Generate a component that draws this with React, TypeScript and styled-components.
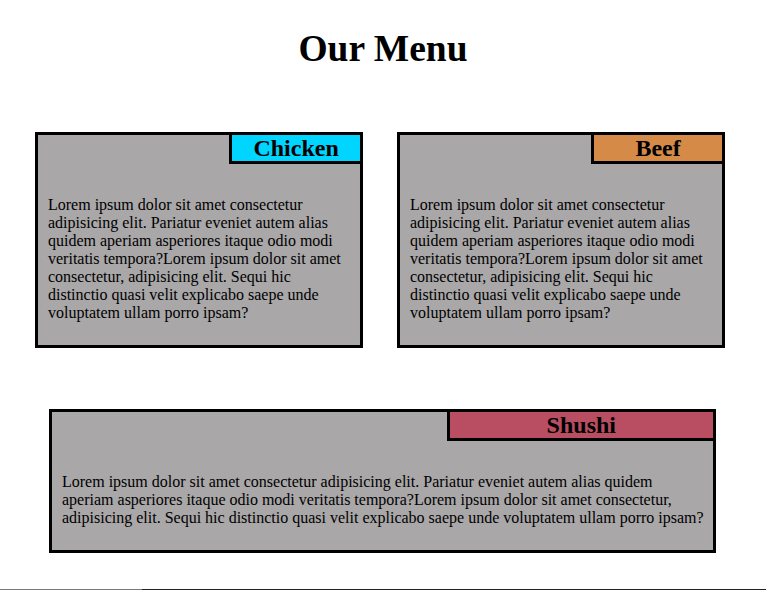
import React from "react";
import styled, { createGlobalStyle } from "styled-components";

const GlobalStyle = createGlobalStyle`
  html, body {
    margin: 0;
    padding: 0;
    background: #ffffff;
  }
  body {
    font-family: "Liberation Serif", "Times New Roman", serif;
    color: #000000;
  }
  * { box-sizing: border-box; }
`;

const Page = styled.main`
  width: 766px;
  display: flex;
  flex-direction: column;
`;

const Title = styled.h1`
  margin: 0;
  padding-top: 28px;
  text-align: center;
  font-size: 37.5px;
  font-weight: bold;
  line-height: 42px;
`;

const TopRow = styled.section`
  display: grid;
  grid-template-columns: 328px 328px;
  column-gap: 34px;
  margin: 62px 0 0 35px;
`;

const Card = styled.article<{ $width?: number }>`
  display: flex;
  flex-direction: column;
  border: 3px solid #000000;
  background: #a9a7a8;
  ${(p) => (p.$width ? `width: ${p.$width}px;` : "")}
`;

const Header = styled.header`
  display: flex;
  justify-content: flex-end;
`;

const Label = styled.h2<{ $color: string }>`
  margin: 0;
  width: calc(40% + 2px);
  height: 29px;
  border-left: 3px solid #000000;
  border-bottom: 3px solid #000000;
  background: ${(p) => p.$color};
  text-align: center;
  font-size: 24px;
  font-weight: bold;
  line-height: 27px;
`;

const Body = styled.p`
  margin: 0;
  padding: 32px 7px 23px 10px;
  font-size: 16px;
  line-height: 18px;
`;

const WideRow = styled.section`
  display: flex;
  margin: 61px 0 0 49px;
`;

const Footer = styled.footer`
  margin-top: 36px;
  height: 1px;
  display: grid;
  grid-template-columns: 142px 1fr;
`;

const FooterPart = styled.div<{ $tone: string }>`
  background: ${(p) => p.$tone};
`;

const lorem =
  "Lorem ipsum dolor sit amet consectetur adipisicing elit. Pariatur eveniet autem alias quidem aperiam asperiores itaque odio modi veritatis tempora?Lorem ipsum dolor sit amet consectetur, adipisicing elit. Sequi hic distinctio quasi velit explicabo saepe unde voluptatem ullam porro ipsam?";

type Item = { name: string; color: string };

const MenuCard: React.FC<{ item: Item; width?: number }> = ({ item, width }) => (
  <Card $width={width}>
    <Header>
      <Label $color={item.color}>{item.name}</Label>
    </Header>
    <Body>{lorem}</Body>
  </Card>
);

export default function App() {
  return (
    <>
      <GlobalStyle />
      <Page>
        <Title>Our Menu</Title>
        <TopRow>
          <MenuCard item={{ name: "Chicken", color: "#00d5ff" }} />
          <MenuCard item={{ name: "Beef", color: "#d58a48" }} />
        </TopRow>
        <WideRow>
          <MenuCard item={{ name: "Shushi", color: "#b94e63" }} width={667} />
        </WideRow>
        <Footer>
          <FooterPart $tone="#7a7a7a" />
          <FooterPart $tone="#222222" />
        </Footer>
      </Page>
    </>
  );
}
